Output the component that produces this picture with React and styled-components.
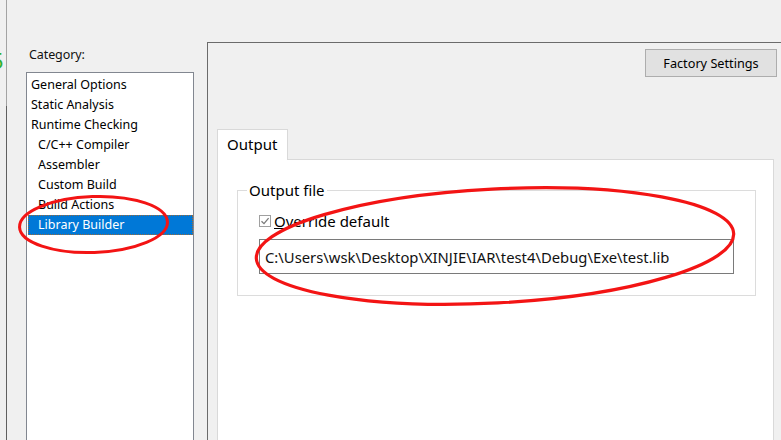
import React from "react";
import styled, { createGlobalStyle } from "styled-components";

const Global = createGlobalStyle`
  html, body { margin: 0; padding: 0; background: #f0f0f0; }
  body { font-family: "Noto Sans", "Open Sans", sans-serif; color: #000; }
  * { box-sizing: border-box; }
`;

const Screen = styled.div`
  position: relative;
  width: 781px;
  height: 440px;
  overflow: hidden;
  background: #f0f0f0;
  display: flex;
  align-items: stretch;
`;

const EdgeStrip = styled.div`
  width: 7px;
  flex: none;
  display: flex;
  flex-direction: column;
`;

const EdgeTop = styled.div`
  height: 106px;
  border-right: 1px solid #a3a3a3;
  background: #f0f0f0;
  overflow: hidden;
  padding-top: 46px;
`;

const EdgeBottom = styled.div`
  flex: 1;
  border-right: 1px solid #5f5f5f;
  background: #efefef;
`;

const GreenMark = styled.span`
  display: block;
  margin-left: -9px;
  font-family: "Noto Sans", sans-serif;
  font-size: 22px;
  line-height: 28px;
  color: #2fb02f;
`;

const CategoryPane = styled.div`
  width: 200px;
  flex: none;
  display: flex;
  flex-direction: column;
  padding: 47px 14px 0 19px;
`;

const CategoryLabel = styled.div`
  padding-left: 3px;
  font-size: 12.5px;
  line-height: 16px;
  color: #111;
  letter-spacing: -0.1px;
`;

const CategoryList = styled.ul`
  list-style: none;
  margin: 9px 0 0 0;
  padding: 2px 0 0 1px;
  width: 168px;
  flex: 1;
  background: #fff;
  border: 1px solid #828790;
  border-bottom: none;
`;

const CategoryItem = styled.li`
  height: 20px;
  line-height: 20px;
  padding-left: ${(p) => (p.$indent ? 10 : 3)}px;
  font-size: 12.5px;
  white-space: nowrap;
  color: ${(p) => (p.$selected ? "#fff" : "#000")};
  background: ${(p) => (p.$selected ? "#0078d7" : "transparent")};
  outline: ${(p) => (p.$selected ? "1px dotted #9a6a3a" : "none")};
  outline-offset: -1px;
`;

const OptionsPane = styled.div`
  flex: 1;
  margin-top: 42px;
  border-top: 1px solid #6b6b6b;
  border-left: 1px solid #6b6b6b;
  display: flex;
  flex-direction: column;
  min-width: 0;
`;

const ButtonRow = styled.div`
  display: flex;
  justify-content: flex-end;
  padding: 6px 4px 0 0;
`;

const PushButton = styled.button`
  width: 132px;
  height: 28px;
  padding: 0;
  background: #e1e1e1;
  border: 1px solid #adadad;
  font-family: "Noto Sans", sans-serif;
  font-size: 12.7px;
  color: #000;
`;

const Tabs = styled.div`
  flex: 1;
  display: flex;
  flex-direction: column;
  margin-top: 52px;
  padding: 0 7px 0 9px;
`;

const TabStrip = styled.div`
  display: flex;
  position: relative;
  z-index: 1;
  margin-bottom: -1px;
`;

const Tab = styled.div`
  width: 71px;
  height: 31px;
  padding: 4px 0 0 9px;
  background: #fff;
  border: 1px solid #d9d9d9;
  border-bottom: none;
  font-size: 15px;
  line-height: 20px;
  color: #000;
`;

const TabPage = styled.div`
  flex: 1;
  background: #fff;
  border: 1px solid #d9d9d9;
  border-bottom: none;
  padding-top: 20px;
`;

const GroupBox = styled.fieldset`
  margin: 0 17px 0 19px;
  padding: 0;
  border: 1px solid #dcdcdc;
  min-width: 0;
`;

const GroupLegend = styled.legend`
  margin-left: 9px;
  padding: 0 2px;
  font-size: 15px;
  line-height: 20px;
  color: #000;
`;

const GroupBody = styled.div`
  display: flex;
  flex-direction: column;
  padding: 11px 21px 21px 21px;
`;

const CheckRow = styled.label`
  display: flex;
  align-items: center;
  height: 20px;
  gap: 3px;
  font-size: 15px;
  line-height: 20px;
  color: #000;
`;

const CheckBox = styled.span`
  width: 12px;
  height: 12px;
  border: 1px solid #a0a0a0;
  background: #fff;
  display: flex;
  align-items: center;
  justify-content: center;
`;

const PathField = styled.div`
  margin-top: 8px;
  height: 35px;
  border: 1px solid #7a7a7a;
  background: #fff;
  padding-left: 5px;
  display: flex;
  align-items: center;
  font-size: 14.8px;
  color: #111;
  white-space: nowrap;
  overflow: hidden;
`;

const Annotations = styled.svg`
  position: absolute;
  left: 0;
  top: 0;
  width: 781px;
  height: 440px;
  pointer-events: none;
`;

const categories = [
  { label: "General Options" },
  { label: "Static Analysis" },
  { label: "Runtime Checking" },
  { label: "C/C++ Compiler", indent: true },
  { label: "Assembler", indent: true },
  { label: "Custom Build", indent: true },
  { label: "Build Actions", indent: true },
  { label: "Library Builder", indent: true, selected: true },
];

export default function App() {
  return (
    <>
      <Global />
      <Screen>
        <EdgeStrip>
          <EdgeTop>
            <GreenMark>5</GreenMark>
          </EdgeTop>
          <EdgeBottom />
        </EdgeStrip>
        <CategoryPane>
          <CategoryLabel>Category:</CategoryLabel>
          <CategoryList>
            {categories.map((c) => (
              <CategoryItem key={c.label} $indent={c.indent} $selected={c.selected}>
                {c.label}
              </CategoryItem>
            ))}
          </CategoryList>
        </CategoryPane>
        <OptionsPane>
          <ButtonRow>
            <PushButton>Factory Settings</PushButton>
          </ButtonRow>
          <Tabs>
            <TabStrip>
              <Tab>Output</Tab>
            </TabStrip>
            <TabPage>
              <GroupBox>
                <GroupLegend>Output file</GroupLegend>
                <GroupBody>
                  <CheckRow>
                    <CheckBox>
                      <svg width="10" height="10" viewBox="0 0 10 10">
                        <path d="M1.5 5.2 L4 7.6 L8.6 2.2" fill="none" stroke="#7a7a7a" strokeWidth="1.3" />
                      </svg>
                    </CheckBox>
                    <span>
                      <u>O</u>verride default
                    </span>
                  </CheckRow>
                  <PathField>C:\Users\wsk\Desktop\XINJIE\IAR\test4\Debug\Exe\test.lib</PathField>
                </GroupBody>
              </GroupBox>
            </TabPage>
          </Tabs>
        </OptionsPane>
        <Annotations viewBox="0 0 781 440">
          <ellipse cx="93.5" cy="224.5" rx="74" ry="28" fill="none" stroke="#f31414" strokeWidth="3" transform="rotate(-2 93.5 224.5)" />
          <ellipse cx="495" cy="246" rx="239" ry="57" fill="none" stroke="#f31414" strokeWidth="3.2" transform="rotate(-3 495 246)" />
        </Annotations>
      </Screen>
    </>
  );
}
